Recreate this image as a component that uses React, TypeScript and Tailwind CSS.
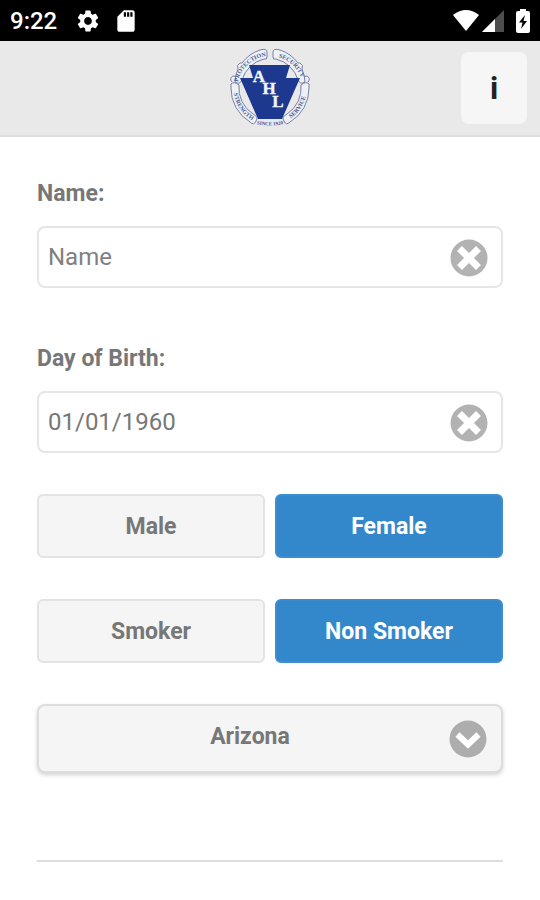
import { useState } from "react";
import { MdSdCard, MdSettings } from "react-icons/md";

function Logo() {
  return (
    <svg viewBox="0 0 80 80" className="size-20" role="img" aria-label="AHL">
      <defs>
        <path id="ring-top-left" d="M8 33 A33 33 0 0 1 35 8.500" />
        <path id="ring-top-right" d="M45 8.500 A33 33 0 0 1 72 33" />
        <path id="ring-left" d="M3.500 41 A36.500 36.500 0 0 0 26 74" />
        <path id="ring-right" d="M54 74 A36.500 36.500 0 0 0 76.500 41" />
        <path id="ring-bottom" d="M22 75 Q40 80 58 75" />
      </defs>
      <g fill="#eef0f4" stroke="#7480aa" strokeWidth="1" strokeLinejoin="round">
        <path d="M2 34 Q-1 30 3 28 L8 29 M78 34 Q81 30 77 28 L72 29" />
        <path d="M5 34 A36 36 0 0 1 8 21 Q6 17 10 15 L12 15 A37 37 0 0 1 30 2 Q37 0 37 4 V9 Q37 12 34 11 A30 30 0 0 0 12 32 Q10 37 5 34 Z" />
        <path d="M75 34 A36 36 0 0 0 72 21 Q74 17 70 15 L68 15 A37 37 0 0 0 50 2 Q43 0 43 4 V9 Q43 12 46 11 A30 30 0 0 1 68 32 Q70 37 75 34 Z" />
        <path d="M1 36 Q4 33 9 37 A31 31 0 0 0 23 66 Q29 69 26 73 Q24 78 20 74 A39 39 0 0 1 1 40 Z" />
        <path d="M79 36 Q76 33 71 37 A31 31 0 0 1 57 66 Q51 69 54 73 Q56 78 60 74 A39 39 0 0 0 79 40 Z" />
      </g>
      <g fill="#4a5790" fontFamily="Liberation Serif, serif" fontSize="6" fontWeight="700" textAnchor="middle">
        <text><textPath href="#ring-top-left" startOffset="50%">PROTECTION</textPath></text>
        <text><textPath href="#ring-top-right" startOffset="50%">SECURITY</textPath></text>
        <text><textPath href="#ring-left" startOffset="50%">STRENGTH</textPath></text>
        <text><textPath href="#ring-right" startOffset="50%">SERVICE</textPath></text>
        <text fontSize="5"><textPath href="#ring-bottom" startOffset="50%">SINCE 1920</textPath></text>
      </g>
      <path d="M19 17 H60 L56 30 H70 L52 71 H28 L10 30 H23 Z" fill="#1d398f" />
      <text
        x="29 39 48"
        y="34 46 59"
        fill="#f4f5f8"
        stroke="#f4f5f8"
        strokeWidth="0.4"
        fontFamily="Liberation Serif, serif"
        fontSize="17"
        fontWeight="700"
        textAnchor="middle"
      >
        AHL
      </text>
    </svg>
  );
}

function StatusBar() {
  return (
    <div className="flex h-[41px] items-center justify-between bg-black px-[10px] text-white">
      <div className="flex items-center">
        <span className="text-[24px] font-medium leading-none">9:22</span>
        <MdSettings className="ml-[18px] size-[26px]" />
        <MdSdCard className="ml-3 size-[26px]" />
      </div>
      <div className="flex items-center">
        <svg viewBox="0 0 28 22" className="h-[22px] w-7" aria-hidden="true">
          <path d="M1 5 Q14 -5 27 5 L14 21 Z" fill="#fff" />
        </svg>
        <svg viewBox="0 0 22 22" className="ml-[2px] size-[22px]" aria-hidden="true">
          <path d="M22 0 V22 H0 Z" fill="#4d4d4d" />
          <path d="M13 9 V22 H0 Z" fill="#fff" />
        </svg>
        <svg viewBox="0 0 14 24" className="ml-3 h-6 w-[14px]" aria-hidden="true">
          <path d="M4 0 H10 V2 H12 Q14 2 14 4 V22 Q14 24 12 24 H2 Q0 24 0 22 V4 Q0 2 2 2 H4 Z" fill="#fff" />
          <path d="M9 6 L3 13.500 H6.500 L5 20 L11 12 H7.500 Z" fill="#000" />
        </svg>
      </div>
    </div>
  );
}

type FieldProps = {
  id: string;
  label: string;
  value: string;
  placeholder?: string;
  onChange: (value: string) => void;
};

function Field({ id, label, value, placeholder, onChange }: FieldProps) {
  return (
    <div>
      <label htmlFor={id} className="block text-[23px] font-bold leading-7">
        {label}
      </label>
      <div className="mt-[18px] flex h-[62px] items-center rounded-lg border-2 border-[#e6e6e6] bg-white pl-[9px] pr-[13px]">
        <input
          id={id}
          type="text"
          value={value}
          placeholder={placeholder}
          onChange={(e) => onChange(e.target.value)}
          className="min-w-0 flex-1 text-[24px] leading-7 outline-none placeholder:text-[#808080]"
        />
        <button type="button" aria-label={`Clear ${label}`} className="pt-[2px]" onClick={() => onChange("")}>
          <svg viewBox="0 0 38 38" className="size-[38px]" aria-hidden="true">
            <circle cx="19" cy="19" r="18.500" fill="#b2b2b2" />
            <path d="M9.500 9.500 L28.500 28.500 M28.500 9.500 L9.500 28.500" stroke="#fff" strokeWidth="7" />
          </svg>
        </button>
      </div>
    </div>
  );
}

type ToggleProps = {
  name: string;
  legend: string;
  options: string[];
  value: string;
  onChange: (value: string) => void;
};

function Toggle({ name, legend, options, value, onChange }: ToggleProps) {
  return (
    <fieldset aria-label={legend} className="grid grid-cols-2 gap-[10px]">
      {options.map((option) => (
        <label key={option} className="cursor-pointer">
          <input
            type="radio"
            name={name}
            value={option}
            checked={value === option}
            onChange={() => onChange(option)}
            className="peer sr-only"
          />
          <span className="flex h-16 items-center justify-center rounded-md border-2 border-[#e3e3e3] bg-[#f5f5f5] pt-[2px] text-[23px] font-bold leading-7 peer-checked:border-[#3d8dd0] peer-checked:bg-[#3388cc] peer-checked:text-white">
            {option}
          </span>
        </label>
      ))}
    </fieldset>
  );
}

const STATES = ["Alabama", "Arizona", "Arkansas", "California", "Colorado", "Florida", "Georgia", "Texas"];

export default function App() {
  const [name, setName] = useState("");
  const [birthday, setBirthday] = useState("01/01/1960");
  const [gender, setGender] = useState("Female");
  const [smoker, setSmoker] = useState("Non Smoker");
  const [state, setState] = useState("Arizona");

  return (
    <div className="min-h-screen bg-white font-[Roboto,sans-serif] text-[#777777]">
      <StatusBar />

      <header className="grid h-24 grid-cols-[1fr_auto_1fr] items-center border-b-2 border-[#dedede] bg-[#e9e9e9] px-[13px]">
        <span />
        <Logo />
        <button
          type="button"
          aria-label="Information"
          className="h-[72px] w-[66px] justify-self-end rounded-lg bg-[#f6f6f6] text-[31px] font-bold leading-none text-[#222222]"
        >
          i
        </button>
      </header>

      <main className="px-[37px] pt-[43px]">
        <Field id="name" label="Name:" placeholder="Name" value={name} onChange={setName} />

        <div className="mt-[57px]">
          <Field id="birthday" label="Day of Birth:" value={birthday} onChange={setBirthday} />
        </div>

        <div className="mt-[41px] grid gap-[41px]">
          <Toggle name="gender" legend="Gender" options={["Male", "Female"]} value={gender} onChange={setGender} />
          <Toggle
            name="smoker"
            legend="Smoking"
            options={["Smoker", "Non Smoker"]}
            value={smoker}
            onChange={setSmoker}
          />

          <div className="relative">
            <select
              aria-label="State"
              value={state}
              onChange={(e) => setState(e.target.value)}
              className="block h-[69px] w-full appearance-none rounded-lg border-2 border-[#dddddd] bg-[#f5f5f5] pb-[2px] pl-5 pr-[60px] text-center text-[23px] font-bold shadow-[0_2px_4px_rgba(0,0,0,0.18)] outline-none [text-align-last:center]"
            >
              {STATES.map((s) => (
                <option key={s}>{s}</option>
              ))}
            </select>
            <svg
              viewBox="0 0 38 38"
              className="pointer-events-none absolute inset-y-0 right-4 my-auto size-[38px]"
              aria-hidden="true"
            >
              <circle cx="19" cy="19" r="18.500" fill="#adadad" />
              <path d="M8.500 14.500 L19 24.500 L29.500 14.500" fill="none" stroke="#fff" strokeWidth="6" />
            </svg>
          </div>
        </div>

        <hr className="mt-[87px] border-t-2 border-[#dddddd]" />
      </main>
    </div>
  );
}
